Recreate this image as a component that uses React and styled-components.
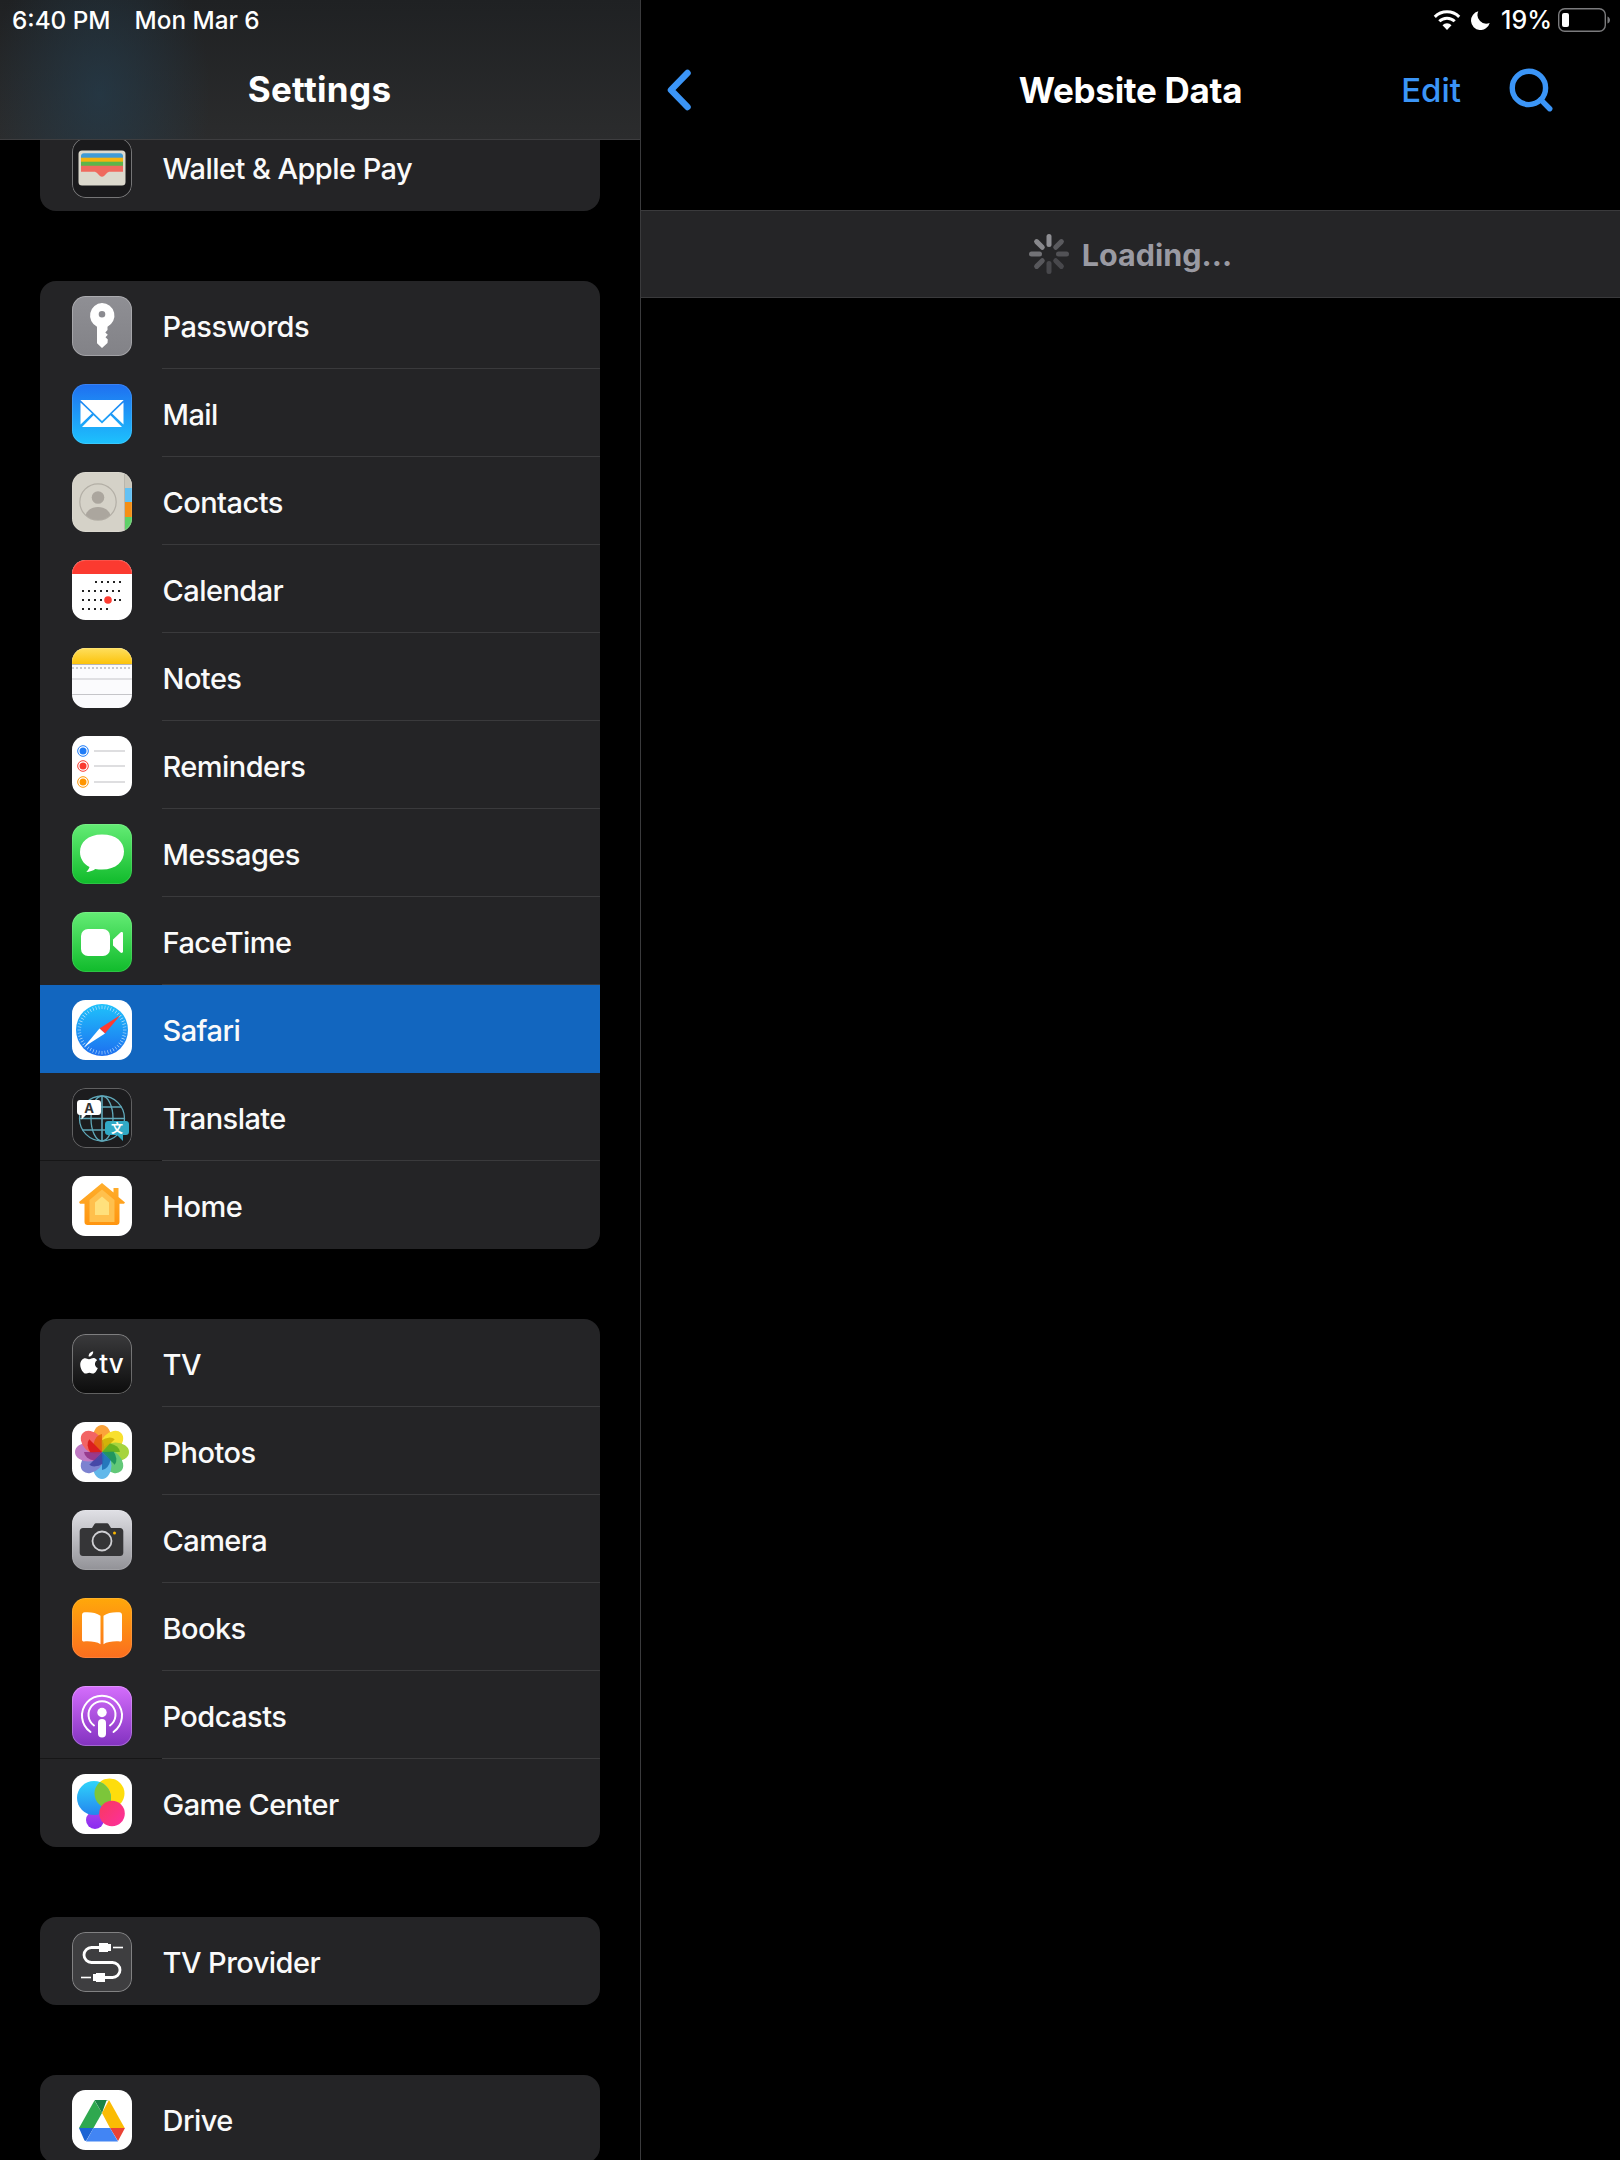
import React from 'react';
import styled, { createGlobalStyle } from 'styled-components';
import { Search } from 'lucide-react';

const Global = createGlobalStyle`
  html, body { margin: 0; padding: 0; background: #000; }
  * { box-sizing: border-box; }
`;

const Page = styled.div`
  width: 1620px; height: 2160px; overflow: hidden; display: flex; background: #000;
  font-family: Inter, "Liberation Sans", sans-serif; color: #fff;
`;
const Sidebar = styled.aside`
  width: 641px; flex: none; border-right: 1px solid #3a3a3c; display: flex; flex-direction: column;
`;
const SideHeader = styled.header`
  height: 140px; flex: none; border-bottom: 1px solid #3e3e40; padding: 0 0 0 12px;
  background:
    radial-gradient(ellipse 110px 170px at 100px 95px, rgba(36,62,80,.65), rgba(36,62,80,0) 100%),
    linear-gradient(180deg, #1f2123 0%, #2b2c2d 100%);
  display: flex; flex-direction: column;
`;
const StatusLeft = styled.div`
  height: 40px; display: flex; align-items: center; gap: 24px; font-size: 24.3px; font-weight: 500;
`;
const BarTitle = styled.h1`
  margin: 0; height: 100px; display: flex; align-items: center; justify-content: center;
  font-size: 35px; font-weight: 700;
`;
const SideTitle = styled(BarTitle)`
  margin-left: -12px; padding-right: 1px; letter-spacing: .3px;
`;
const List = styled.div`
  display: flex; flex-direction: column; gap: 70px; padding: 0 40px; flex: 1; min-height: 0;
`;
const Card = styled.section`
  background: #242426; border-radius: 16px; overflow: hidden; flex: none;
  ${p => p.$clipped && `
    height: 71px; border-radius: 0 0 16px 16px; display: flex; flex-direction: column; justify-content: flex-end;
  `}
`;
const Row = styled.div`
  height: 88px; flex: none; position: relative; display: flex; align-items: flex-start; padding: 15px 0 0 32px;
  background: ${p => (p.$active ? '#1266bf' : 'transparent')};
  &::after {
    content: ''; display: ${p => (p.$last || p.$active ? 'none' : 'block')};
    position: absolute; left: 122px; right: 0; bottom: 0; height: 1px; background: #3a3a3c;
  }
  &::before {
    content: ''; display: ${p => (p.$seam ? 'block' : 'none')};
    position: absolute; left: 0; width: 122px; bottom: 0; height: 1px; background: #161617;
  }
`;
const Tile = styled.div`
  width: 60px; height: 60px; border-radius: 13.5px; overflow: hidden; flex: none; position: relative;
  svg { display: block; width: 60px; height: 60px; }
  &::after {
    content: ''; position: absolute; inset: 0; border-radius: 13.5px;
    box-shadow: inset 0 0 0 1px rgba(255,255,255,${p => p.$rim || 0.12});
  }
`;
const Label = styled.span`
  margin-left: 30.5px; height: 60px; display: flex; align-items: center; font-size: 29px; font-weight: 500; letter-spacing: -.55px;
  white-space: nowrap; color: #fafafa;
`;
const Detail = styled.main`
  flex: 1; min-width: 0; display: flex; flex-direction: column;
`;
const StatusRight = styled.div`
  height: 40px; display: flex; align-items: center; justify-content: flex-end; padding-right: 10px;
  font-size: 25px; font-weight: 500;
`;
const Nav = styled.nav`
  height: 100px; padding: 0 64px 0 25px; display: flex; align-items: center; position: relative;
`;
const NavTitle = styled(BarTitle)`
  position: absolute; left: 0; right: 0; top: 0; letter-spacing: -.3px;
`;
const EditBtn = styled.span`
  margin-left: auto; font-size: 33px; font-weight: 500; color: #3b95f7;
`;
const SearchBtn = styled.span`
  display: flex; margin-left: 45px; color: #3b95f7;
`;
const LoadingRow = styled.div`
  margin-top: 70px; height: 88px; background: #252527; border-top: 1px solid #3a3a3c; border-bottom: 1px solid #3a3a3c;
  display: flex; align-items: center; justify-content: center; gap: 13px;
`;
const LoadingText = styled.span`
  font-size: 30.5px; font-weight: 700; color: #9a9aa2;
`;
const Pct = styled.span`
  margin: 0 6px 0 11px;
`;

const Key = () => (
  <svg viewBox="0 0 60 60">
    <defs><linearGradient id="kg" x1="0" y1="0" x2="0" y2="1"><stop offset="0" stopColor="#8f8f94"/><stop offset="1" stopColor="#828287"/></linearGradient></defs>
    <rect width="60" height="60" fill="url(#kg)"/>
    <path fillRule="evenodd" fill="#fff" d="M30 7a12.500 12.500 0 0 1 5.500 23.700V34l-2.200 2.400 2.500 2.400-2.300 2.400 2.300 2.300-.3 3.500-5.500 5-5-4.700V30.700A12.500 12.500 0 0 1 30 7zm0 8a3.300 3.300 0 1 0 0 6.600 3.300 3.300 0 0 0 0-6.600z"/>
  </svg>
);
const Mail = () => (
  <svg viewBox="0 0 60 60">
    <defs><linearGradient id="mg" x1="0" y1="0" x2="0" y2="1"><stop offset="0" stopColor="#1f6ff0"/><stop offset="1" stopColor="#1dc2fd"/></linearGradient></defs>
    <rect width="60" height="60" fill="url(#mg)"/>
    <path fill="#fff" d="M9 16h42c.3 0 .5 0 .7.1L30 37 8.300 16.100c.2-.1.4-.1.7-.1z"/>
    <path fill="#fff" d="M8.500 18.500v22L20 29.500zM51.500 18.500v22L40 29.500z"/>
    <path fill="#fff" d="M10 43 21.500 31.300 30 39.500l8.500-8.200L50 43z"/>
  </svg>
);
const Contacts = () => (
  <svg viewBox="0 0 60 60">
    <rect width="60" height="60" fill="#d5d2c8"/>
    <rect x="53" width="7" height="16" fill="#c9c6bb"/>
    <rect x="53" y="16" width="7" height="14" fill="#63c1f4"/>
    <rect x="53" y="30" width="7" height="15" fill="#f58f15"/>
    <rect x="53" y="45" width="7" height="15" fill="#5fd068"/>
    <rect x="52" width="1" height="60" fill="#b9b6ac"/>
    <circle cx="26" cy="30" r="18.200" fill="none" stroke="#b3afa6" strokeWidth="1.200"/>
    <circle cx="26" cy="25.500" r="6.300" fill="#aba69e"/>
    <path fill="#aba69e" d="M13.500 43c2-5.500 6.800-8 12.500-8s10.500 2.500 12.500 8a18 18 0 0 1-25 0z"/>
  </svg>
);
const Calendar = () => {
  const rows = [[22, [23,29,35,41,47]], [31, [10,16,22,28,34,40,46]], [40, [10,16,22,28,42,47]], [49, [10,16,22,28,34]]];
  return (
    <svg viewBox="0 0 60 60">
      <rect width="60" height="60" fill="#fff"/>
      <rect width="60" height="14" fill="#fb3a30"/>
      {rows.map(([y, xs]) => xs.map(x => <rect key={`${x}-${y}`} x={x} y={y - 1} width="2" height="2" fill="#222"/>))}
      <circle cx="36" cy="40" r="3.800" fill="#fb3a30"/>
    </svg>
  );
};
const Notes = () => (
  <svg viewBox="0 0 60 60">
    <defs><linearGradient id="ng" x1="0" y1="0" x2="0" y2="1"><stop offset="0" stopColor="#fedf5e"/><stop offset="1" stopColor="#fcc30b"/></linearGradient></defs>
    <rect width="60" height="60" fill="#fbfbfd"/>
    <rect width="60" height="16" fill="url(#ng)"/>
    <rect y="16" width="60" height="1" fill="#b6b6ba"/>
    <line x1="0" x2="60" y1="20" y2="20" stroke="#b9b9bd" strokeWidth="1.500" strokeDasharray="2 2"/>
    <rect y="30.500" width="60" height="1" fill="#c5c5c9"/>
    <rect y="46" width="60" height="1" fill="#c5c5c9"/>
  </svg>
);
const Reminders = () => {
  const items = [[15, '#1f7cf7'], [30, '#fa3a30'], [46, '#ff9500']];
  return (
    <svg viewBox="0 0 60 60">
      <rect width="60" height="60" fill="#fff"/>
      {items.map(([y, c]) => (
        <g key={y}>
          <circle cx="11" cy={y} r="5.300" fill="none" stroke={c} strokeWidth="1"/>
          <circle cx="11" cy={y} r="3.500" fill={c}/>
          <rect x="22" y={y - .6} width="31" height="1.200" fill="#c9c9cc"/>
        </g>
      ))}
    </svg>
  );
};
const Messages = () => (
  <svg viewBox="0 0 60 60">
    <defs><linearGradient id="sg" x1="0" y1="0" x2="0" y2="1"><stop offset="0" stopColor="#64ec75"/><stop offset="1" stopColor="#10bb2b"/></linearGradient></defs>
    <rect width="60" height="60" fill="url(#sg)"/>
    <path fill="#fff" d="M30 10.500c-14.300 0-22 8-22 17.500 0 6.500 3.500 12 9.500 15-.6 2-2 3.800-3.200 5 3.300-.2 6.700-1.400 9-3.100 2.200.5 4.500.7 6.700.7 14.300 0 22-8.200 22-18s-7.700-17.100-22-17.100z"/>
  </svg>
);
const FaceTime = () => (
  <svg viewBox="0 0 60 60">
    <defs><linearGradient id="fg" x1="0" y1="0" x2="0" y2="1"><stop offset="0" stopColor="#64ec75"/><stop offset="1" stopColor="#10bb2b"/></linearGradient></defs>
    <rect width="60" height="60" fill="url(#fg)"/>
    <rect x="9" y="17" width="29" height="27" rx="7" fill="#fff"/>
    <path fill="#fff" d="M41 27.500l7.500-7c1-.8 2.500-.4 2.500 1v18c0 1.400-1.500 1.800-2.500 1l-7.500-7z"/>
  </svg>
);
const Safari = () => {
  const ticks = Array.from({ length: 48 }, (_, i) => i * 7.5);
  return (
    <svg viewBox="0 0 60 60">
      <defs><linearGradient id="sf" x1="0" y1="0" x2="0" y2="1"><stop offset="0" stopColor="#1fc2fb"/><stop offset="1" stopColor="#1d6ff0"/></linearGradient></defs>
      <rect width="60" height="60" fill="#fff"/>
      <circle cx="30" cy="30" r="26" fill="url(#sf)"/>
      {ticks.map(a => <rect key={a} x="29.700" y="5.500" width=".6" height="3.500" fill="#cfe8fb" transform={`rotate(${a} 30 30)`}/>)}
      <path fill="#ff3b30" d="M48.500 15 33 33.500l-5.500-5z"/>
      <path fill="#fff" d="M12 47l15.500-18.500 5.500 5z"/>
    </svg>
  );
};
const Translate = () => (
  <svg viewBox="0 0 60 60">
    <rect width="60" height="60" fill="#1c1c1e"/>
    <g fill="none" stroke="#5fa7b8" strokeWidth="1.300">
      <circle cx="30" cy="30.500" r="22.500"/>
      <ellipse cx="30" cy="30.500" rx="11" ry="22.500"/>
      <path d="M7.500 30.500h45M10.500 19h39M10.500 42h39"/>
      <path d="M30 8v45" strokeWidth="1.600"/>
    </g>
    <path fill="#fff" d="M8 12h18c1.700 0 3 1.300 3 3v9c0 1.700-1.300 3-3 3H14l-4.500 4.500V27H8c-1.700 0-3-1.300-3-3v-9c0-1.700 1.300-3 3-3z"/>
    <text x="17" y="24.500" textAnchor="middle" fontFamily="Inter, sans-serif" fontSize="13" fontWeight="700" fill="#333">A</text>
    <path fill="#31a9c6" d="M36 33h18c1.700 0 3 1.300 3 3v8c0 1.700-1.300 3-3 3h-3v6l-6-6h-9c-1.700 0-3-1.300-3-3v-8c0-1.700 1.300-3 3-3z"/>
    <text x="45" y="45" textAnchor="middle" fontFamily="'Noto Sans CJK SC', sans-serif" fontSize="12" fontWeight="700" fill="#fff">文</text>
  </svg>
);
const Home = () => (
  <svg viewBox="0 0 60 60">
    <defs><linearGradient id="hg" x1="0" y1="0" x2="0" y2="1"><stop offset="0" stopColor="#ffae2c"/><stop offset="1" stopColor="#ff9510"/></linearGradient></defs>
    <rect width="60" height="60" fill="#fff"/>
    <path fill="url(#hg)" d="M7 26 30 7l11.500 9.500V12h5v9l6.500 5.500-1 1.300H47.500V46c0 1.700-1.300 3-3 3h-29c-1.700 0-3-1.300-3-3V27.800H8z"/>
    <path fill="#ffc04d" d="M30 13.500 42.500 24v22h-25V24z"/>
    <path fill="#ffe07c" d="M30 20.500l7 6V39H23V26.500z"/>
  </svg>
);
const Tv = () => (
  <svg viewBox="0 0 60 60">
    <defs><linearGradient id="tg" x1="0" y1="0" x2="0" y2="1"><stop offset="0" stopColor="#3a3a3c"/><stop offset="1" stopColor="#0c0c0c"/></linearGradient></defs>
    <rect width="60" height="60" fill="url(#tg)"/>
    <path transform="translate(-4 -3) scale(1.2)" fill="#fff" d="M17.500 23.500c1.500 0 2.500-1 3.600-1 .9 0 2.300.5 3.200 1.800-2.700 1.600-2.300 5.300.5 6.500-.6 1.900-2.400 4.700-4 4.700-1.100 0-1.700-.7-3-.7-1.300 0-2 .7-3.100.7-2 0-4.500-4.100-4.500-7.400 0-3.300 2.100-5.400 4.200-5.400 1.200 0 1.800.8 3.100.8zM21 17c.1 2.300-1.800 4.400-3.800 4.200-.2-2.200 1.800-4.300 3.800-4.200z"/>
    <text x="39.500" y="39" textAnchor="middle" fontFamily="Inter, sans-serif" fontSize="26" fontWeight="500" fill="#fff">tv</text>
  </svg>
);
const Photos = () => {
  const petals = ['#fba33a','#f8e02e','#a6d43e','#62c878','#62b8ea','#7c82d0','#c07ac4','#f26464'];
  const dark = ['#e05a00','#c8a800','#58a818','#128a58','#1668b0','#383a9c','#8c2a80','#d40c0c'];
  return (
    <svg viewBox="0 0 60 60">
      <rect width="60" height="60" fill="#fff"/>
      {petals.map((c, i) => (
        <g key={c} transform={`rotate(${i * 45} 30 30)`}>
          <ellipse cx="30" cy="16.500" rx="9.500" ry="13.500" fill={c}/>
        </g>
      ))}
      {petals.map((c, i) => (
        <path key={`d${c}`} transform={`rotate(${i * 45} 30 30)`} d="M30 30 30 12 A 9.500 13.500 0 0 0 21.500 22z" fill={dark[i]} opacity=".8"/>
      ))}
    </svg>
  );
};
const Camera = () => (
  <svg viewBox="0 0 60 60">
    <defs><linearGradient id="cg" x1="0" y1="0" x2="0" y2="1"><stop offset="0" stopColor="#e0e0e5"/><stop offset="1" stopColor="#929297"/></linearGradient></defs>
    <rect width="60" height="60" fill="url(#cg)"/>
    <path fill="#353537" d="M11 18h9l2.500-4c.3-.5.800-.7 1.300-.7h11.400c.5 0 1 .2 1.300.7l2.500 4h9c2 0 3.300 1.300 3.300 3.300v21.400c0 2-1.300 3.300-3.300 3.300H11c-2 0-3.300-1.300-3.300-3.300V21.300C7.700 19.300 9 18 11 18z"/>
    <circle cx="30" cy="31" r="9.500" fill="none" stroke="#cfcfd3" strokeWidth="1.800"/>
    <circle cx="42.500" cy="23" r="1.500" fill="#f7b500"/>
  </svg>
);
const Books = () => (
  <svg viewBox="0 0 60 60">
    <defs><linearGradient id="bg" x1="0" y1="0" x2="0" y2="1"><stop offset="0" stopColor="#ffa80a"/><stop offset="1" stopColor="#fb6e1f"/></linearGradient></defs>
    <rect width="60" height="60" fill="url(#bg)"/>
    <path fill="#fff" d="M10 17c0-1.500 1-2.600 2.800-2.700 5.700-.4 11.800.4 15.700 3.500v28.500c-3.700-2.800-11-3.200-16.400-2.800-1.200.1-2.100-.6-2.100-1.800zM50 17c0-1.500-1-2.600-2.800-2.700-5.700-.4-11.800.4-15.700 3.500v28.500c3.700-2.800 11-3.200 16.400-2.800 1.200.1 2.100-.6 2.100-1.800z"/>
  </svg>
);
const Podcasts = () => (
  <svg viewBox="0 0 60 60">
    <defs><linearGradient id="pg" x1="0" y1="0" x2="0" y2="1"><stop offset="0" stopColor="#d56efc"/><stop offset="1" stopColor="#8232c0"/></linearGradient></defs>
    <rect width="60" height="60" fill="url(#pg)"/>
    <g fill="none" stroke="#fff" strokeWidth="2" strokeLinecap="round">
      <path d="M18.500 46a20 20 0 1 1 23 0"/>
      <path d="M22 39.500a13.500 13.500 0 1 1 16 0"/>
    </g>
    <circle cx="30" cy="26.500" r="4.700" fill="#fff"/>
    <rect x="26" y="33" width="8" height="18.500" rx="4" fill="#fff"/>
  </svg>
);
const GameCenter = () => (
  <svg viewBox="0 0 60 60">
    <defs>
      <linearGradient id="g1" x1="0" y1="0" x2="0" y2="1"><stop offset="0" stopColor="#2fd4fb"/><stop offset="1" stopColor="#2486ee"/></linearGradient>
      <linearGradient id="g2" x1="0" y1="0" x2="0" y2="1"><stop offset="0" stopColor="#a941ec"/><stop offset="1" stopColor="#8a2bf0"/></linearGradient>
      <linearGradient id="g3" x1="0" y1="0" x2="1" y2="1"><stop offset="0" stopColor="#f83a5c"/><stop offset="1" stopColor="#fd2fa0"/></linearGradient>
      <clipPath id="gcBlue"><circle cx="22" cy="24" r="17"/></clipPath>
    </defs>
    <rect width="60" height="60" fill="#fff"/>
    <circle cx="23" cy="46" r="9" fill="url(#g2)"/>
    <circle cx="37.500" cy="19.500" r="15" fill="#fedd0c"/>
    <circle cx="22" cy="24" r="17" fill="url(#g1)"/>
    <circle cx="37.500" cy="19.500" r="15" fill="#7cc63a" clipPath="url(#gcBlue)"/>
    <circle cx="40" cy="39.500" r="12.800" fill="url(#g3)"/>
  </svg>
);
const Provider = () => (
  <svg viewBox="0 0 60 60">
    <rect width="60" height="60" fill="#3e3e40"/>
    <g fill="none" stroke="#fff" strokeWidth="2.800">
      <path d="M27 15.500H19.500a7.500 7.500 0 0 0 0 15H40.500a7.500 7.500 0 0 1 0 15H33"/>
    </g>
    <rect x="27" y="11" width="9" height="9" fill="#fff"/>
    <rect x="36" y="12" width="3" height="7" fill="#fff"/>
    <rect x="41" y="14.700" width="10" height="1.600" fill="#fff"/>
    <rect x="24" y="41" width="9" height="9" fill="#fff"/>
    <rect x="21" y="42" width="3" height="7" fill="#fff"/>
    <rect x="9" y="44.700" width="10" height="1.600" fill="#fff"/>
  </svg>
);
const Drive = () => (
  <svg viewBox="0 0 60 60">
    <rect width="60" height="60" fill="#fff"/>
    <path fill="#1c64d4" d="M7 38h14.500l-7.500 13-1.500-.6z"/>
    <path fill="#2fa84f" d="M22.500 10.500 30 23 21.500 38H7z"/>
    <path fill="#1b8346" d="M22.500 10H36.500l-2 .5L30 23z"/>
    <path fill="#fbbc04" d="M37 10 52.700 38H38L30 23z"/>
    <path fill="#ea4335" d="M38 38h15l-7 13z"/>
    <path fill="#4285f4" d="M21.500 38H38l8 13.500H14z"/>
  </svg>
);
const Wallet = () => (
  <svg viewBox="0 0 60 60">
    <rect width="60" height="60" fill="#1a1a1c"/>
    <rect x="6.500" y="12.500" width="47" height="35" rx="3.500" fill="#dcd9cd"/>
    <path fill="#3f9bd6" d="M9 18c0-1.600 1.200-2.800 2.800-2.800h36.400c1.600 0 2.800 1.200 2.800 2.800v3H9z"/>
    <rect x="9" y="19.700" width="42" height="4.500" fill="#f5b30f"/>
    <rect x="9" y="23.700" width="42" height="4.500" fill="#5cb54a"/>
    <path fill="#ef6a5e" d="M9 27.700h42v6H38c-1.500 0-2.300.6-3 1.400l-3 3c-1 1-3 1-4 0l-3-3c-.7-.8-1.500-1.400-3-1.400H9z"/>
  </svg>
);

const Spinner = () => {
  const shades = ['#8e8e93', '#5a5a5e', '#525256', '#48484c', '#48484c', '#58585c', '#727276', '#88888c'];
  return (
    <svg width="40" height="40" viewBox="0 0 40 40">
      {shades.map((c, i) => (
        <rect key={i} x="17.500" y="0" width="5" height="13" rx="2.500" fill={c} transform={`rotate(${i * 45} 20 20)`}/>
      ))}
    </svg>
  );
};
const WifiGlyph = styled.svg`
  margin-right: 10px;
`;
const Wifi = () => (
  <WifiGlyph width="28" height="20" viewBox="0 0 28 20">
    <g fill="none" stroke="#fff" strokeWidth="3">
      <path d="M1.800 6.800a17.500 17.500 0 0 1 24.400 0"/>
      <path d="M6.300 11.300a11 11 0 0 1 15.400 0"/>
    </g>
    <path fill="#fff" d="M14 20l-4.500-4.800a6.300 6.300 0 0 1 9 0z"/>
  </WifiGlyph>
);
const Moon = () => (
  <svg width="19" height="19" viewBox="0 0 19 19">
    <path fill="#fff" d="M7.300.3A9.500 9.500 0 1 0 18.700 12 8.800 8.800 0 0 1 7.300.3z"/>
  </svg>
);
const Battery = () => (
  <svg width="52" height="24" viewBox="0 0 52 24">
    <rect x=".7" y=".7" width="46.600" height="22.600" rx="6" fill="none" stroke="#7b7b7d" strokeWidth="1.400"/>
    <rect x="4" y="5" width="7" height="14" rx="2" fill="#fff"/>
    <path fill="#7b7b7d" d="M49.500 8.500c1.500.5 2.500 2 2.500 3.500s-1 3-2.500 3.500z"/>
  </svg>
);
const Chevron = () => (
  <svg width="26" height="42" viewBox="0 0 26 42">
    <path d="M21.500 4 5 21l16.500 17" fill="none" stroke="#3b95f7" strokeWidth="6.500" strokeLinecap="round" strokeLinejoin="round"/>
  </svg>
);

const groups = [
  [['Passwords', Key, .25], ['Mail', Mail], ['Contacts', Contacts], ['Calendar', Calendar], ['Notes', Notes], ['Reminders', Reminders],
   ['Messages', Messages], ['FaceTime', FaceTime], ['Safari', Safari], ['Translate', Translate, .3], ['Home', Home]],
  [['TV', Tv, .35], ['Photos', Photos], ['Camera', Camera], ['Books', Books], ['Podcasts', Podcasts, .25], ['Game Center', GameCenter]],
  [['TV Provider', Provider, .35]],
  [['Drive', Drive]],
];
const seams = new Set(['Translate', 'Podcasts']);

const SettingRow = ({ name, Icon, rim, last }) => (
  <Row $active={name === 'Safari'} $last={last} $seam={seams.has(name)}>
    <Tile $rim={rim}><Icon /></Tile>
    <Label>{name}</Label>
  </Row>
);

export default function App() {
  return (
    <Page>
      <Global />
      <Sidebar>
        <SideHeader>
          <StatusLeft><span>6:40 PM</span><span>Mon Mar 6</span></StatusLeft>
          <SideTitle>Settings</SideTitle>
        </SideHeader>
        <List>
          <Card $clipped>
            <SettingRow name="Wallet & Apple Pay" Icon={Wallet} rim={.4} last />
          </Card>
          {groups.map((g, i) => (
            <Card key={i}>
              {g.map(([name, Icon, rim], j) => (
                <SettingRow key={name} name={name} Icon={Icon} rim={rim} last={j === g.length - 1} />
              ))}
            </Card>
          ))}
        </List>
      </Sidebar>
      <Detail>
        <StatusRight>
          <Wifi /><Moon /><Pct>19%</Pct><Battery />
        </StatusRight>
        <Nav>
          <Chevron />
          <NavTitle>Website Data</NavTitle>
          <EditBtn>Edit</EditBtn>
          <SearchBtn><Search size={50} strokeWidth={2.6} /></SearchBtn>
        </Nav>
        <LoadingRow>
          <Spinner />
          <LoadingText>Loading...</LoadingText>
        </LoadingRow>
      </Detail>
    </Page>
  );
}
